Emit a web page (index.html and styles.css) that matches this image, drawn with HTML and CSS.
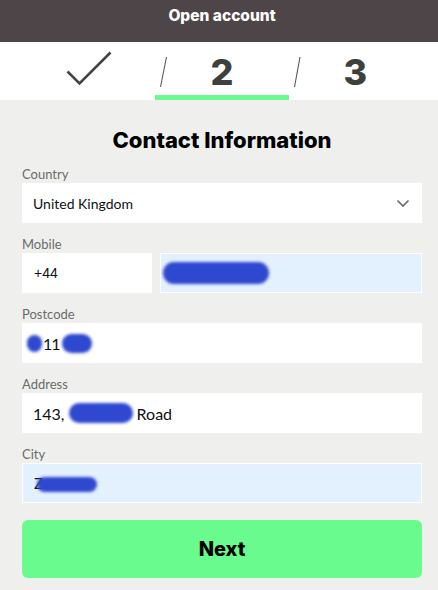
FILE: index.html
```html
<!DOCTYPE html>
<html lang="en">
<head>
<meta charset="utf-8">
<title>Open account</title>
<link rel="stylesheet" href="styles.css">
</head>
<body>
<header class="topbar">Open account</header>
<nav class="steps">
  <div class="step step-done">
    <span class="slash-space"></span>
    <svg class="check" width="46" height="36" viewBox="0 0 46 36"><path d="M1.5 20.5 L13.5 32.5 L44.5 1.5" fill="none" stroke="#444" stroke-width="2.6"/></svg>
    <span class="slash-space"></span>
  </div>
  <div class="step step-current">
    <svg class="slash" width="10" height="32" viewBox="0 0 10 32"><path d="M8.5 1 L2.5 31" stroke="#555" stroke-width="1.1"/></svg>
    <span class="num">2</span>
    <span class="slash-space"></span>
  </div>
  <div class="step">
    <svg class="slash" width="10" height="32" viewBox="0 0 10 32"><path d="M8 1 L2.5 31" stroke="#555" stroke-width="1.1"/></svg>
    <span class="num">3</span>
    <span class="slash-space"></span>
  </div>
</nav>
<main class="form">
  <h1 class="title">Contact Information</h1>
  <div class="field">
    <div class="label">Country</div>
    <div class="box select">
      <span>United Kingdom</span>
      <svg class="chev" width="14" height="9" viewBox="0 0 14 9"><path d="M1.5 1.5 L7 7 L12.5 1.5" fill="none" stroke="#6a6a6a" stroke-width="1.7"/></svg>
    </div>
  </div>
  <div class="field">
    <div class="label">Mobile</div>
    <div class="row">
      <div class="box code">+44</div>
      <div class="box autofill"><span class="blur blur-mobile"></span></div>
    </div>
  </div>
  <div class="field">
    <div class="label">Postcode</div>
    <div class="box big"><span class="blur blur-pc1"></span><span class="txt narrow">11</span><span class="blur blur-pc2"></span></div>
  </div>
  <div class="field">
    <div class="label">Address</div>
    <div class="box big"><span class="txt">143,&nbsp;</span><span class="blur blur-addr"></span><span class="txt">Road</span></div>
  </div>
  <div class="field">
    <div class="label">City</div>
    <div class="box autofill big"><span class="txt z">Z</span><span class="blur blur-city"></span></div>
  </div>
  <button class="next">Next</button>
</main>
</body>
</html>
```
FILE: styles.css
```css
* { box-sizing: border-box; }
html, body { margin: 0; padding: 0; overflow: hidden; }
body {
  width: 438px;
  height: 590px;
  background: #eff0ee;
  font-family: Lato, "Liberation Sans", sans-serif;
}
.topbar {
  height: 42px;
  background: #4e4549;
  color: #fff;
  font-family: Inter, Lato, sans-serif;
  font-weight: 800;
  font-size: 15.5px;
  line-height: 20px;
  padding: 6px 0 0 6px;
  text-align: center;
}
.steps {
  height: 58px;
  background: #fff;
  padding: 0 16px 0 22px;
  display: grid;
  grid-template-columns: repeat(3, 1fr);
}
.step {
  display: grid;
  grid-template-columns: 10px 1fr 10px;
  align-items: center;
  justify-items: center;
  padding-top: 2px;
}
.step-done { align-items: start; padding-top: 9px; }
.step-current { border-bottom: 5px solid #69fb8d; padding-top: 7px; }
.slash { margin-left: 6px; }
.num {
  font-family: Inter, Lato, sans-serif;
  font-weight: 800;
  font-size: 36px;
  line-height: 40px;
  color: #3d403d;
}
.form { padding: 0 16px 0 22px; }
.title {
  margin: 26px 0 11px;
  font-family: Inter, Lato, sans-serif;
  font-weight: 800;
  font-size: 22px;
  line-height: 28px;
  text-align: center;
  color: #000;
}
.field { margin-bottom: 12px; }
.label {
  font-size: 13px;
  line-height: 18px;
  color: #6b6b6b;
}
.box {
  height: 40px;
  background: #fff;
  display: flex;
  align-items: center;
  padding: 0 11px;
  font-size: 14px;
  color: #111;
}
.big { font-size: 16px; }
.narrow { letter-spacing: -1px; }
.select { justify-content: space-between; padding-right: 12px; }
.row { display: flex; gap: 8px; }
.code {
  width: 130px;
  padding-left: 12px;
  font-family: "Liberation Sans", Arial, sans-serif;
  font-size: 14px;
}
.autofill { flex: 1; background: #e3f0fe; border: 1px solid #fff; padding-left: 2px; }
.blur {
  display: inline-block;
  background: #2e48d0;
  border-radius: 12px;
  filter: blur(1.5px);
}
.blur-mobile { width: 106px; height: 22px; }
.box .blur-pc1 { width: 15px; height: 17px; margin-left: -6px; margin-right: 1px; }
.box .blur-pc2 { width: 30px; height: 19px; margin-left: 2px; }
.blur-addr { width: 64px; height: 20px; margin: 0 4px 0 0; }
.autofill .z { margin-left: 9px; font-size: 15px; }
.blur-city { width: 60px; height: 15px; margin-left: -6px; margin-top: 2px; }
.next {
  display: block;
  width: 100%;
  height: 58px;
  margin-top: 17px;
  border: 0;
  border-radius: 6px;
  background: #69fb8d;
  font-family: Inter, Lato, sans-serif;
  font-weight: 800;
  font-size: 20px;
  color: #000;
}
```
